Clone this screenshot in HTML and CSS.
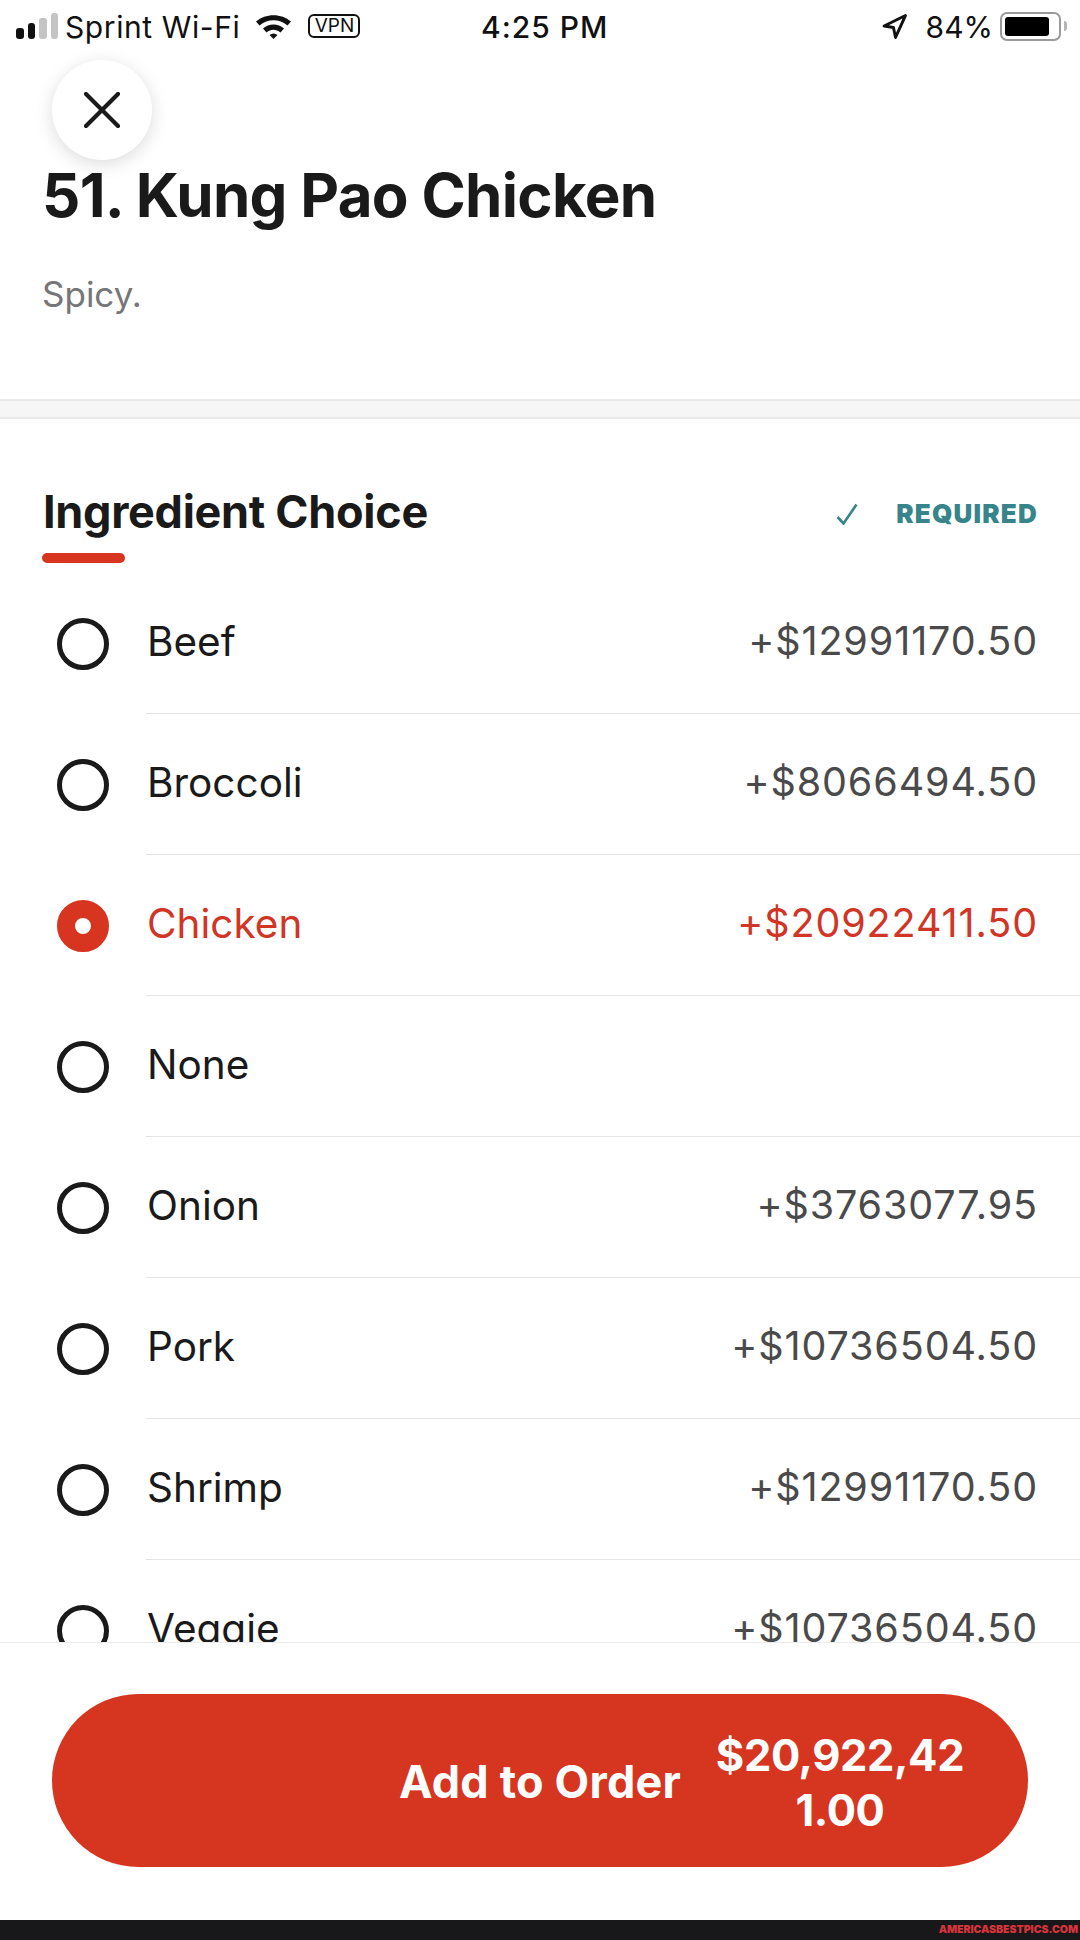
FILE: index.html
```html
<!DOCTYPE html>
<html lang="en">
<head>
<meta charset="utf-8">
<title>51. Kung Pao Chicken</title>
<link rel="stylesheet" href="styles.css">
</head>
<body>
<div class="page">
  <main class="main">
    <header class="status">
      <div class="status-left">
        <div class="signal"><i class="bar b1"></i><i class="bar b2"></i><i class="bar b3 off"></i><i class="bar b4 off"></i></div>
        <span class="carrier">Sprint Wi-Fi</span>
        <svg class="wifi" viewBox="0 0 36 26"><path d="M0.5 8.500C10 0 26 0 35.500 8.500L32 12.500C24 5.500 12 5.500 4 12.500Z"/><path d="M7.500 15.500C13.500 10.300 22.500 10.300 28.500 15.500L25 19.500C20.500 15.700 15.500 15.700 11 19.500Z"/><path d="M14 22C16.500 20 19.500 20 22 22L18 26Z"/></svg>
        <span class="vpn">VPN</span>
      </div>
      <span class="time">4:25 PM</span>
      <div class="status-right">
        <svg class="loc" viewBox="0 0 24 24"><path d="M2 11.500L22.500 1.500L13 22.500L11 13Z"/></svg>
        <span class="pct">84%</span>
        <div class="battery"><div class="cell"><div class="charge"></div></div><div class="nub"></div></div>
      </div>
    </header>
    <button class="close" aria-label="Close">
      <svg viewBox="0 0 36 36"><path d="M2 2L34 34M34 2L2 34"/></svg>
    </button>
    <section class="item">
      <h1 class="title">51. Kung Pao Chicken</h1>
      <p class="desc">Spicy.</p>
    </section>
    <div class="band"></div>
    <section class="group">
      <div class="group-head">
        <div class="group-title">
          <h2>Ingredient Choice</h2>
          <div class="accent"></div>
        </div>
        <div class="req">
          <svg viewBox="0 0 22 22"><path d="M1.500 14L7.500 20.500L20.500 1.500"/></svg>
          <span>REQUIRED</span>
        </div>
      </div>
      <ul class="opts">
        <li class="opt"><span class="radio"></span><div class="opt-body"><span class="name">Beef</span><span class="price">+$12991170.50</span></div></li>
        <li class="opt"><span class="radio"></span><div class="opt-body"><span class="name">Broccoli</span><span class="price">+$8066494.50</span></div></li>
        <li class="opt sel"><span class="radio"></span><div class="opt-body"><span class="name">Chicken</span><span class="price">+$20922411.50</span></div></li>
        <li class="opt"><span class="radio"></span><div class="opt-body"><span class="name">None</span></div></li>
        <li class="opt"><span class="radio"></span><div class="opt-body"><span class="name">Onion</span><span class="price">+$3763077.95</span></div></li>
        <li class="opt"><span class="radio"></span><div class="opt-body"><span class="name">Pork</span><span class="price">+$10736504.50</span></div></li>
        <li class="opt"><span class="radio"></span><div class="opt-body"><span class="name">Shrimp</span><span class="price">+$12991170.50</span></div></li>
        <li class="opt"><span class="radio"></span><div class="opt-body"><span class="name">Veggie</span><span class="price">+$10736504.50</span></div></li>
      </ul>
    </section>
  </main>
  <footer class="foot">
    <button class="cta"><span class="cta-label">Add to Order</span><span class="cta-price">$20,922,421.00</span></button>
  </footer>
  <div class="mark"><span>AMERICASBESTPICS.COM</span></div>
</div>
</body>
</html>
```
FILE: styles.css
```css
* { box-sizing: border-box; }
html, body { margin: 0; padding: 0; background: #fff; }
body { font-family: "Inter", "Liberation Sans", sans-serif; color: #1a1a1a; }
.page { width: 1080px; height: 1940px; display: flex; flex-direction: column; overflow: hidden; }
.main { position: relative; height: 1642px; overflow: hidden; flex: none; }

.status { height: 52px; display: flex; align-items: center; position: relative; color: #111; }
.status-left { display: flex; align-items: center; padding-left: 16px; }
.signal { display: flex; align-items: flex-end; gap: 4px; height: 26px; width: 42px; }
.bar { display: block; width: 7.500px; border-radius: 3px; background: #111; }
.b1 { height: 11px; }
.b2 { height: 16px; }
.b3 { height: 21px; }
.b4 { height: 26px; }
.off { background: #c4c4c4; }
.carrier { margin: 2px 0 0 7px; font-size: 30px; letter-spacing: 0.6px; }
.wifi { width: 37px; height: 26px; margin-left: 15px; fill: #111; }
.vpn { margin-left: 16px; width: 52px; height: 24px; border: 2px solid #111; border-radius: 6px; font-size: 19px; line-height: 20px; text-align: center; }
.time { position: absolute; left: 481px; top: 9px; font-size: 30px; font-weight: 500; letter-spacing: 1px; }
.status-right { margin-left: auto; display: flex; align-items: center; padding-right: 13px; }
.loc { width: 25px; height: 25px; fill: none; stroke: #111; stroke-width: 2.800; stroke-linejoin: round; }
.pct { margin: 2px 0 0 19px; font-size: 30px; }
.battery { margin-left: 7px; display: flex; align-items: center; }
.cell { width: 61px; height: 29px; border: 2px solid #9a9a9a; border-radius: 7px; padding: 3px; }
.charge { width: 44px; height: 100%; background: #000; border-radius: 3px; }
.nub { width: 3px; height: 10px; margin-left: 3px; background: #b5b5b5; border-radius: 0 3px 3px 0; }

.close { position: absolute; left: 52px; top: 60px; width: 100px; height: 100px; border: 0; padding: 0; border-radius: 50%; background: #fff; box-shadow: 0 4px 18px rgba(0,0,0,.14); display: flex; align-items: center; justify-content: center; }
.close svg { width: 36px; height: 36px; fill: none; stroke: #1a1a1a; stroke-width: 4.200; stroke-linecap: round; }

.item { padding: 106px 42px 0; height: 347px; }
.title { margin: 0; font-size: 60px; line-height: 74px; font-weight: 700; letter-spacing: -0.700px; }
.desc { margin: 40px 0 0; font-size: 35px; line-height: 44px; color: #767676; }
.band { height: 20px; background: #f6f6f6; border-top: 2px solid #e9e9e9; border-bottom: 2px solid #e9e9e9; }

.group-head { height: 154px; padding: 66px 43px 0 42px; display: flex; justify-content: space-between; align-items: flex-start; }
.group-title h2 { margin: 0 0 0 1px; font-size: 45px; line-height: 54px; font-weight: 700; letter-spacing: -0.300px; }
.accent { width: 83px; height: 10px; margin-top: 14px; border-radius: 5px; background: #d83520; }
.req { display: flex; align-items: center; gap: 38px; margin-top: 14px; color: #37858a; }
.req svg { width: 22px; height: 22px; fill: none; stroke: #37858a; stroke-width: 2.600; }
.req span { font-size: 26px; line-height: 30px; font-weight: 900; letter-spacing: 1.200px; margin-right: -1px; }

.opts { list-style: none; margin: 0; padding: 0; }
.opt { display: flex; height: 141px; }
.radio { flex: none; width: 52px; height: 52px; margin: 45px 37px 0 57px; border: 5.500px solid #1a1a1a; border-radius: 50%; }
.opt-body { flex: 1; display: flex; justify-content: space-between; align-items: center; padding: 0 43px 0 1px; height: 141px; border-bottom: 1px solid #e4e4e4; }
.name { color: #1a1a1a; font-size: 40.500px; margin-top: -4px; }
.price { color: #4a4a4a; font-size: 39.500px; letter-spacing: 0.900px; margin: -4px -1px 0 0; }
.sel .radio { border: 18px solid #d83520; background: #fff; }
.sel .name, .sel .price { color: #d03526; }

.foot { flex: 1; border-top: 1px solid #ebebeb; padding: 51px 52px 0; background: #fff; }
.cta { width: 976px; height: 173px; border: 0; border-radius: 87px; background: #d6351f; color: #fff; display: flex; align-items: center; justify-content: flex-end; padding: 0 62px 0 0; font-family: inherit; font-weight: 700; }
.cta-label { font-size: 45px; margin: 2px 33px 0 0; letter-spacing: 0.200px; }
.cta-price { width: 252px; font-size: 43.500px; line-height: 55px; letter-spacing: -0.400px; margin-top: 4px; text-align: center; word-break: break-all; }

.mark { flex: none; height: 20px; background: #18181a; text-align: right; padding-right: 2px; font-size: 10.500px; line-height: 20px; font-weight: 900; color: #d8343a; }
```
